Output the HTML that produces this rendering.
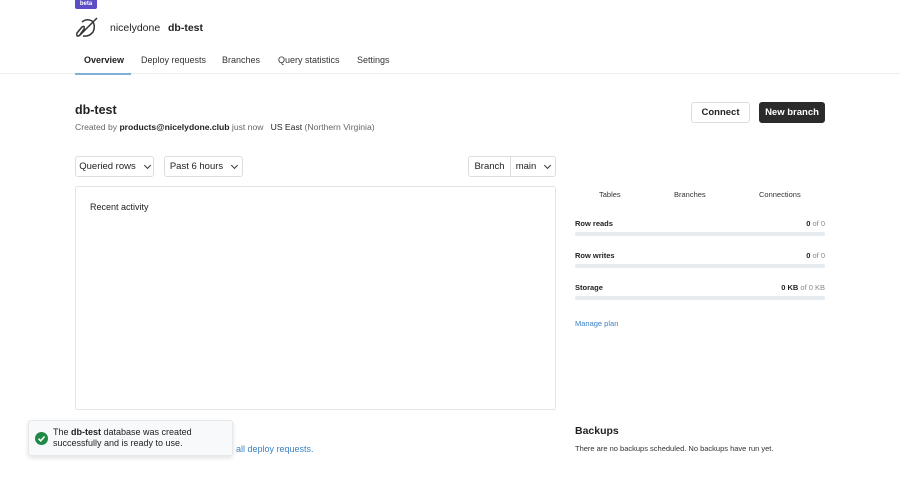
<!DOCTYPE html>
<html><head><style>
*{box-sizing:border-box;margin:0;padding:0}
body{width:900px;height:484px;background:#fff;font-family:"Liberation Sans",sans-serif;color:#222;position:relative;overflow:hidden;font-size:9px}
.a{position:absolute;white-space:nowrap}
.btn{position:absolute;border:1px solid #ddd;border-radius:3px;font-size:9.5px;display:flex;align-items:center;justify-content:center;background:#fff}
.bar{position:absolute;left:575px;width:250px;height:4px;background:#e6ebf0;border-radius:2px}
.chev{display:inline-block;width:5px;height:5px;border-right:1.2px solid #333;border-bottom:1.2px solid #333;transform:rotate(45deg);margin-left:9px;margin-top:-3px}
</style></head><body>
<div class="a" style="left:75px;top:0;width:22px;height:9px;background:#5b4ec4;color:#fff;font-size:6px;font-weight:bold;text-align:center;line-height:8px;border-radius:0 0 2px 2px">beta</div>
<svg class="a" style="left:75px;top:17px" width="23" height="22" viewBox="0 0 23 22" fill="none" stroke="#333" stroke-width="1.5"><path d="M7 5 Q12 1 17 4 Q21 8 18 15 Q14 20 8 19"/><path d="M22 1 L5 18 Q1 21 2 16 L7 10 Q10 8 9 12 L4 19"/></svg>
<div class="a" style="left:110px;top:22px;font-size:10.5px">nicelydone</div>
<div class="a" style="left:168px;top:22px;font-size:10.5px;font-weight:bold;color:#222">db-test</div>
<div class="a" style="left:84px;top:55px;font-size:9px;font-weight:bold">Overview</div>
<div class="a" style="left:141px;top:55px;font-size:9px;color:#333">Deploy requests</div>
<div class="a" style="left:222px;top:55px;font-size:9px;color:#333">Branches</div>
<div class="a" style="left:278px;top:55px;font-size:9px;color:#333">Query statistics</div>
<div class="a" style="left:357px;top:55px;font-size:9px;color:#333">Settings</div>
<div class="a" style="left:0;top:73px;width:900px;height:1px;background:#eee"></div>
<div class="a" style="left:75px;top:73px;width:56px;height:1.5px;background:#7fb2d6"></div>
<div class="a" style="left:75px;top:103px;font-size:12.5px;font-weight:bold">db-test</div>
<div class="a" style="left:75px;top:122px;font-size:8.6px;color:#666">Created by <b style="color:#222">products@nicelydone.club</b> just now &nbsp;&nbsp;<span style="color:#222">US East</span> (Northern Virginia)</div>
<div class="btn" style="left:691px;top:102px;width:59px;height:21px;font-weight:bold">Connect</div>
<div class="btn" style="left:759px;top:102px;width:66px;height:21px;background:#2b2b2b;border-color:#2b2b2b;color:#fff;font-weight:bold">New branch</div>
<div class="btn" style="left:75px;top:156px;width:79px;height:21px">Queried rows<span class="chev"></span></div>
<div class="btn" style="left:164px;top:156px;width:79px;height:21px">Past 6 hours<span class="chev"></span></div>
<div class="btn" style="left:468px;top:156px;width:43px;height:21px;border-radius:3px 0 0 3px">Branch</div>
<div class="btn" style="left:510px;top:156px;width:46px;height:21px;border-radius:0 3px 3px 0">main<span class="chev"></span></div>
<div class="a" style="left:75px;top:186px;width:481px;height:224px;border:1px solid #e3e3e3;border-radius:3px"></div>
<div class="a" style="left:90px;top:202px;font-size:9px">Recent activity</div>
<div class="a" style="left:599px;top:190px;font-size:7.5px;color:#333">Tables</div>
<div class="a" style="left:674px;top:190px;font-size:7.5px;color:#333">Branches</div>
<div class="a" style="left:759px;top:190px;font-size:7.5px;color:#333">Connections</div>
<div class="a" style="left:575px;top:219px;font-size:7.5px;font-weight:bold">Row reads</div>
<div class="a" style="right:75px;top:219px;font-size:7.5px;color:#888"><b style="color:#222">0</b> of 0</div>
<div class="bar" style="top:232px"></div>
<div class="a" style="left:575px;top:251px;font-size:7.5px;font-weight:bold">Row writes</div>
<div class="a" style="right:75px;top:251px;font-size:7.5px;color:#888"><b style="color:#222">0</b> of 0</div>
<div class="bar" style="top:264px"></div>
<div class="a" style="left:575px;top:283px;font-size:7.5px;font-weight:bold">Storage</div>
<div class="a" style="right:75px;top:283px;font-size:7.5px;color:#888"><b style="color:#222">0 KB</b> of 0 KB</div>
<div class="bar" style="top:296px"></div>
<div class="a" style="left:575px;top:319px;font-size:7.5px;color:#3b82c4">Manage plan</div>
<div class="a" style="left:575px;top:425px;font-size:10.5px;font-weight:bold">Backups</div>
<div class="a" style="left:575px;top:444px;font-size:7.5px;color:#333">There are no backups scheduled. No backups have run yet.</div>
<div class="a" style="left:236px;top:444px;font-size:9px;color:#3b82c4">all deploy requests.</div>
<div class="a" style="left:28px;top:420px;width:205px;height:36px;background:#f7f9fb;border:1px solid #e6e9ec;border-radius:3px;box-shadow:0 2px 5px rgba(0,0,0,.12)">
<svg style="position:absolute;left:6px;top:11px" width="13" height="13" viewBox="0 0 13 13"><circle cx="6.5" cy="6.5" r="6.5" fill="#1f8a45"/><path d="M3.5 6.7 L5.7 8.8 L9.6 4.5" stroke="#fff" stroke-width="1.6" fill="none"/></svg>
<div style="position:absolute;left:24px;top:6px;font-size:9px;line-height:11px;color:#222">The <b>db-test</b> database was created<br>successfully and is ready to use.</div>
</div>
</body></html>
